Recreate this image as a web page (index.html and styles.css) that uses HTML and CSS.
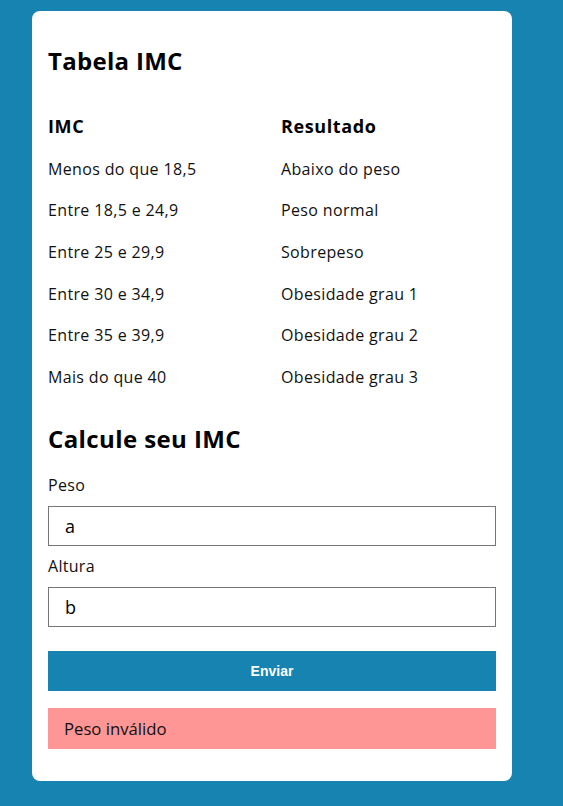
FILE: index.html
```html
<!DOCTYPE html>
<html lang="pt-BR">
<head>
<meta charset="utf-8">
<title>IMC</title>
<link rel="stylesheet" href="styles.css">
</head>
<body>
<main class="card">
  <h1 class="title">Tabela IMC</h1>
  <div class="table">
    <div class="th">IMC</div><div class="th">Resultado</div>
    <div class="td">Menos do que 18,5</div><div class="td">Abaixo do peso</div>
    <div class="td">Entre 18,5 e 24,9</div><div class="td">Peso normal</div>
    <div class="td">Entre 25 e 29,9</div><div class="td">Sobrepeso</div>
    <div class="td">Entre 30 e 34,9</div><div class="td">Obesidade grau 1</div>
    <div class="td">Entre 35 e 39,9</div><div class="td">Obesidade grau 2</div>
    <div class="td">Mais do que 40</div><div class="td">Obesidade grau 3</div>
  </div>
  <h2 class="subtitle">Calcule seu IMC</h2>
  <form class="form">
    <label class="label label-first" for="peso">Peso</label>
    <input class="input" id="peso" type="text" value="a">
    <label class="label" for="altura">Altura</label>
    <input class="input" id="altura" type="text" value="b">
    <button class="button" type="button">Enviar</button>
  </form>
  <div class="error">Peso inválido</div>
</main>
</body>
</html>
```
FILE: styles.css
```css
html, body {
  margin: 0;
  padding: 0;
}
body {
  background: rgb(22, 131, 176);
  font-family: "Open Sans", "DejaVu Sans", sans-serif;
  color: #000;
  min-height: 806px;
  padding-top: 11px;
  box-sizing: border-box;
}
.card {
  margin-left: 32px;
  width: 480px;
  box-sizing: border-box;
  background: #fff;
  border-radius: 8px;
  padding: 34px 16px 32px;
}
.title {
  margin: 0;
  font-size: 24px;
  line-height: 32px;
  font-weight: 700;
  letter-spacing: 0.3px;
}
.table {
  margin-top: 26px;
  display: grid;
  grid-template-columns: 233px 1fr;
}
.th {
  font-size: 18px;
  line-height: 28.8px;
  font-weight: 700;
  padding: 8.5px 0;
  letter-spacing: 0.6px;
}
.td {
  font-size: 16px;
  line-height: 25.6px;
  padding: 8px 0;
  color: #111;
  letter-spacing: 0.35px;
}
.subtitle {
  margin: 25px 0 0;
  font-size: 24px;
  line-height: 32px;
  font-weight: 700;
  letter-spacing: 0.4px;
}
.form {
  display: flex;
  flex-direction: column;
}
.label {
  font-size: 16px;
  line-height: 24px;
  margin: 8.5px 0 8.5px;
  color: #111;
  letter-spacing: 0.3px;
}
.label-first {
  margin-top: 18px;
}
.input {
  height: 40px;
  box-sizing: border-box;
  border: 1px solid #767676;
  padding: 0 16px;
  font-family: "Open Sans", "DejaVu Sans", sans-serif;
  font-size: 18px;
  color: #000;
  margin: 0;
  border-radius: 0;
  outline: none;
}
.button {
  margin-top: 24px;
  height: 40px;
  border: none;
  background: rgb(22, 131, 176);
  color: #fff;
  font-family: "Liberation Sans", Arial, sans-serif;
  font-weight: 700;
  font-size: 14px;
}
.error {
  margin-top: 17px;
  height: 41px;
  box-sizing: border-box;
  background: #ff9696;
  padding: 0 16px;
  display: flex;
  align-items: center;
  font-size: 16.7px;
  color: #111;
}
```
